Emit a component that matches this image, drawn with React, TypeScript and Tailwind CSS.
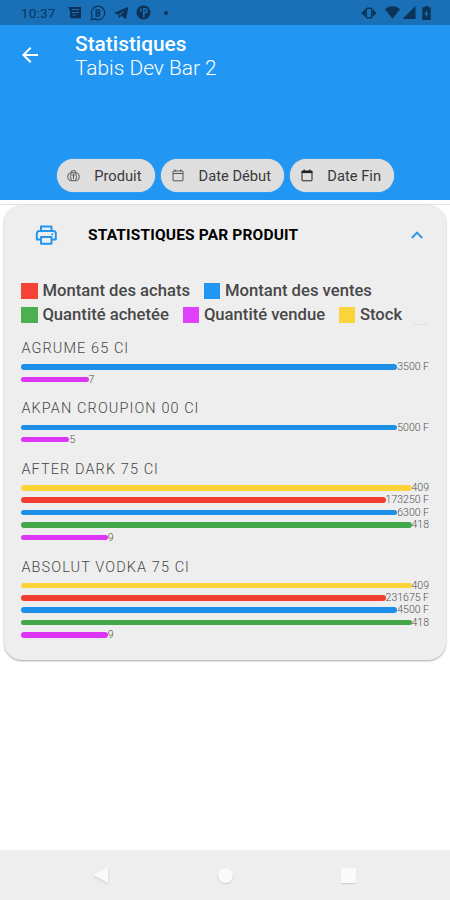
import React, { useState } from 'react';
import clsx from 'clsx';
import { MdArrowBack } from 'react-icons/md';

type Serie = 'achats' | 'ventes' | 'achetee' | 'vendue' | 'stock';

interface Barre {
    serie: Serie;
    valeur: number;
    label: string;
    full?: boolean;
}

interface Produit {
    nom: string;
    barres: Barre[];
}

const COLORS: Record<Serie, string> = {
    achats: 'bg-[#f44336]',
    ventes: 'bg-[#2196f3]',
    achetee: 'bg-[#4caf50]',
    vendue: 'bg-[#e040fb]',
    stock: 'bg-[#fdd33a]',
};

const BAR_COLORS: Record<Serie, string> = {
    achats: 'bg-[#f23e31]',
    ventes: 'bg-[#1c8fe9]',
    achetee: 'bg-[#43a649]',
    vendue: 'bg-[#dc35f6]',
    stock: 'bg-[#fdd33a]',
};

const PRODUITS: Produit[] = [
    {
        nom: 'AGRUME 65 Cl',
        barres: [
            { serie: 'ventes', valeur: 3500, label: '3500 F', full: true },
            { serie: 'vendue', valeur: 7, label: '7' },
        ],
    },
    {
        nom: 'AKPAN CROUPION 00 Cl',
        barres: [
            { serie: 'ventes', valeur: 5000, label: '5000 F', full: true },
            { serie: 'vendue', valeur: 5, label: '5' },
        ],
    },
    {
        nom: 'AFTER DARK 75 Cl',
        barres: [
            { serie: 'stock', valeur: 409, label: '409', full: true },
            { serie: 'achats', valeur: 173250, label: '173250 F', full: true },
            { serie: 'ventes', valeur: 6300, label: '6300 F', full: true },
            { serie: 'achetee', valeur: 418, label: '418', full: true },
            { serie: 'vendue', valeur: 9, label: '9' },
        ],
    },
    {
        nom: 'ABSOLUT VODKA 75 Cl',
        barres: [
            { serie: 'stock', valeur: 409, label: '409', full: true },
            { serie: 'achats', valeur: 231675, label: '231675 F', full: true },
            { serie: 'ventes', valeur: 4500, label: '4500 F', full: true },
            { serie: 'achetee', valeur: 418, label: '418', full: true },
            { serie: 'vendue', valeur: 9, label: '9' },
        ],
    },
];

const StatusBar: React.FC = () => (
    <div className="h-[25px] shrink-0 bg-[#1a70b7] flex items-center text-[#0a3357]">
        <span className="ml-[21px] w-[47px] text-[13.5px] leading-none tracking-[0.2px] pt-[2px] whitespace-nowrap">10:37</span>
        <svg width="14" height="13" viewBox="0 0 14 13" fill="currentColor">
            <path fillRule="evenodd" d="M2 1h11v10a1.200 1.200 0 0 1-1.200 1.200H3.200A1.200 1.200 0 0 1 2 11V5.500L.3 1H2ZM4 3v1h7V3H4Zm0 3v1h7V6H4Zm0 2.600v1h4.200v-1H4Z" />
        </svg>
        <svg className="ml-[7.500px]" width="16" height="16" viewBox="0 0 16 16" fill="none" stroke="currentColor">
            <path strokeWidth="1.200" d="M1.300 14.600l.8-3.600A6.700 6.700 0 1 1 5 13.900l-3.700.7Z" />
            <path strokeWidth="1.400" d="M6.200 5v6h2.100a1.500 1.500 0 0 0 0-3H6.200h2a1.500 1.500 0 0 0 0-3h-2Z" />
        </svg>
        <svg className="ml-[7px]" width="16" height="14" viewBox="0 0 16 14" fill="currentColor">
            <path d="M15.500.8 13 13.200 8.300 9.800 5.900 12.200 5.200 8.500.8 7 15.500.8ZM12.200 4 6.200 8.300l.4 1.800 5.600-6.100Z" />
        </svg>
        <svg className="ml-[7px]" width="15" height="15" viewBox="0 0 15 15">
            <circle cx="7.500" cy="7.500" r="7" fill="currentColor" />
            <path d="M7.800 12.500V3.800h1.500a1.900 1.900 0 0 1 0 3.800H7.800M4.800 3.500v3" fill="none" stroke="#1a70b7" strokeWidth="1.500" />
        </svg>
        <span className="ml-[13px] size-1 rounded-full bg-[#0a3357]" />
        <svg className="ml-auto" width="16" height="12" viewBox="0 0 16 12" fill="none" stroke="currentColor">
            <rect x="5.200" y="1.200" width="5.600" height="9.600" rx="1" strokeWidth="1.400" />
            <path d="M4.500 2 0.300 6 4.500 10ZM11.500 2 15.700 6 11.500 10Z" fill="currentColor" stroke="none" />
        </svg>
        <svg className="ml-2" width="15" height="13" viewBox="0 0 15 13" fill="currentColor">
            <path d="M0 3.300C4.300-.8 10.700-.8 15 3.300L7.500 12.800Z" />
        </svg>
        <svg className="ml-[2px]" width="14" height="13" viewBox="0 0 14 13" fill="currentColor">
            <path d="M13.500 0v13H.5Z" />
        </svg>
        <svg className="ml-[6px] mr-[19px]" width="9" height="14" viewBox="0 0 9 14" fill="currentColor">
            <path fillRule="evenodd" d="M2.800 0h3.400v1.300h2.500V14H.3V1.300h2.500V0ZM4.900 3.800 2.600 8.200h1.300v3.500l2.500-4.600H4.900V3.800Z" />
        </svg>
    </div>
);

const CalendarIcon: React.FC<{ dark?: boolean }> = ({ dark }) => (
    <svg className={dark ? 'text-[#222]' : 'text-[#555]'} width="12" height="13" viewBox="0 0 12 13" fill="none" stroke="currentColor">
        <rect x="1" y="2" width="10" height="9.800" rx="0.500" strokeWidth="1" />
        <path d={dark ? 'M.6 3h10.800' : 'M1 4.500h10'} strokeWidth={dark ? 2.200 : 1} />
        <path d="M3.200.5v2M8.800.5v2" strokeWidth="1.200" />
    </svg>
);

const PriceIcon: React.FC = () => (
    <svg className="text-[#555]" width="13" height="12" viewBox="0 0 13 12" fill="none" stroke="currentColor" strokeWidth="1">
        <path d="M4.300 2.800V1.500Q4.300.8 5 .8h3q.7 0 .7.700v1.300" />
        <path d="M3.500 2.800h6Q12.300 3.200 12.300 6.700T9.500 10.700h-6Q.7 10.200.7 6.700T3.500 2.800Z" />
        <path d="M4.300 3.200Q2.700 6.700 4.300 10.300M8.700 3.200q1.600 3.500 0 7.100" />
        <path d="M6.500 4v5.200M5.300 5.500l1.200-1.300 1.200 1.300" />
    </svg>
);

interface ChipProps {
    icon: React.ReactNode;
    label: string;
    className: string;
}

const Chip: React.FC<ChipProps> = ({ icon, label, className }) => (
    <button className={clsx('h-[33px] shrink-0 rounded-full bg-[#dedede] flex items-center text-[14.7px] text-[#3a3a3a] whitespace-nowrap shadow-[0_0_1px_#dedede]', className)}>
        {icon}
        <span className="ml-auto pt-[2px]">{label}</span>
    </button>
);

const Legend: React.FC<{ serie: Serie; label: string; className?: string }> = ({ serie, label, className }) => (
    <div className={clsx('flex items-center whitespace-nowrap', className)}>
        <span className={clsx('size-[16.5px] mr-[4.5px]', COLORS[serie])} />
        {label}
    </div>
);

const BarRow: React.FC<{ barre: Barre }> = ({ barre }) => (
    <div className="h-[12.4px] flex items-center">
        <div
            className={clsx('h-[5.5px] rounded-full', BAR_COLORS[barre.serie], barre.full && 'flex-1')}
            style={barre.full ? undefined : { width: barre.valeur * 9.6 }}
        />
        <span className="pt-px text-[10.5px] leading-none text-[#505050] font-light whitespace-nowrap">{barre.label}</span>
    </div>
);

const App: React.FC = () => {
    const [open, setOpen] = useState(true);

    return (
        <div className="w-[450px] h-[900px] bg-white flex flex-col overflow-hidden font-[Roboto,sans-serif]">
            <StatusBar />

            <header className="h-[175px] shrink-0 bg-[#2196f3] text-white flex flex-col">
                <div className="flex pt-[7px]">
                    <MdArrowBack className="ml-[18px] mt-[11px] size-6" />
                    <div className="ml-[33px] leading-6">
                        <h1 className="text-[20.9px] font-medium">Statistiques</h1>
                        <p className="text-[20.9px] font-light">Tabis Dev Bar 2</p>
                    </div>
                </div>
                <div className="mt-auto mb-2 ml-[57px] flex gap-[6px]">
                    <Chip icon={<PriceIcon />} label="Produit" className="w-[98px] pl-[10px] pr-[13.5px]" />
                    <Chip icon={<CalendarIcon />} label="Date Début" className="w-[123px] pl-[11px] pr-[13px]" />
                    <Chip icon={<CalendarIcon dark />} label="Date Fin" className="w-[104px] pl-[11px] pr-[13px]" />
                </div>
            </header>

            <div className="mt-1 border-t border-[#e3e3e3] h-0" />

            <section className="mx-1 h-[455px] shrink-0 rounded-[18px] bg-[#eee] shadow-[0_1px_2px_rgba(0,0,0,0.35)]">
                <button onClick={() => setOpen(!open)} className="w-full h-[60px] flex items-center text-black">
                    <svg className="ml-[31px] text-[#2196f3]" width="22" height="20" viewBox="0 0 22 20" fill="none" stroke="currentColor" strokeWidth="2" strokeLinejoin="round">
                        <path d="M6 5.500V1.500h10.500v4M6 14.500H1.800V8.500a2.500 2.500 0 0 1 2.500-2.500h14a2.500 2.500 0 0 1 2.500 2.500v6h-4.300" />
                        <path d="M6 12h10.500v6.700H6ZM16.300 9.200h1.700" />
                    </svg>
                    <span className="ml-[31px] pt-[2px] text-[15.5px] font-bold tracking-[0.16px] whitespace-nowrap">STATISTIQUES PAR PRODUIT</span>
                    <svg className="ml-auto mr-[23px] text-[#2b93e6]" width="12" height="8" viewBox="0 0 12 8" fill="none" stroke="currentColor" strokeWidth="1.900">
                        <path d="M.8 7 6 1.700 11.200 7" />
                    </svg>
                </button>

                {open && (
                    <div className="pl-[17.4px] pr-[17px]">
                        <div className="pt-[14px] text-[16.65px] leading-6 font-medium text-[#484848]">
                            <div className="flex h-6">
                                <Legend serie="achats" label="Montant des achats" className="w-[182.5px]" />
                                <Legend serie="ventes" label="Montant des ventes" />
                            </div>
                            <div className="flex h-6">
                                <Legend serie="achetee" label="Quantité achetée" className="w-[161.5px]" />
                                <Legend serie="vendue" label="Quantité vendue" className="w-[156px]" />
                                <Legend serie="stock" label="Stock" />
                            </div>
                            <div className="ml-auto w-4 border-b border-[#e2e2e2] -mt-[3px] mb-[2px]" />
                        </div>

                        <div className="pt-[10px]">
                            {PRODUITS.map((p) => (
                                <div key={p.nom} className="mb-3">
                                    <h2 className="h-[23.7px] leading-[24.4px] text-[14.5px] font-light tracking-[1.1px] text-[#484848] whitespace-nowrap">{p.nom}</h2>
                                    {p.barres.map((b) => (
                                        <BarRow key={b.serie} barre={b} />
                                    ))}
                                </div>
                            ))}
                        </div>
                    </div>
                )}
            </section>

            <nav className="mt-auto h-[50px] shrink-0 bg-[#eee] flex items-center text-[#fafafa]">
                <svg className="ml-[92px] drop-shadow-[0_1px_1px_rgba(0,0,0,0.15)]" width="16" height="18" viewBox="0 0 16 18" fill="currentColor">
                    <path d="M16 1v16L1 9Z" />
                </svg>
                <span className="ml-[110px] size-[15px] rounded-full bg-[#fafafa] shadow-[0_1px_2px_rgba(0,0,0,0.15)]" />
                <span className="ml-[108px] size-[15px] bg-[#fafafa] shadow-[0_1px_1px_rgba(0,0,0,0.12)]" />
            </nav>
        </div>
    );
};

export default App;
